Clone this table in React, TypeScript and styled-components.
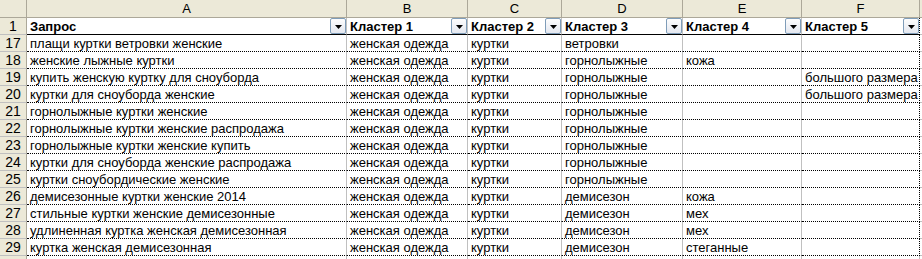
import styled, { createGlobalStyle } from 'styled-components';

const GlobalStyle = createGlobalStyle`
  html, body {
    margin: 0;
    padding: 0;
    background: #ffffff;
    overflow: hidden;
  }
`;

const columns = ['A', 'B', 'C', 'D', 'E', 'F'];
const headers = ['Запрос', 'Кластер 1', 'Кластер 2', 'Кластер 3', 'Кластер 4', 'Кластер 5'];

// номер строки + значения по колонкам A..F
const rows: [number, string[]][] = [
  [17, ['плащи куртки ветровки женские', 'женская одежда', 'куртки', 'ветровки', '', '']],
  [18, ['женские лыжные куртки', 'женская одежда', 'куртки', 'горнолыжные', 'кожа', '']],
  [19, ['купить женскую куртку для сноуборда', 'женская одежда', 'куртки', 'горнолыжные', '', 'большого размера']],
  [20, ['куртки для сноуборда женские', 'женская одежда', 'куртки', 'горнолыжные', '', 'большого размера']],
  [21, ['горнолыжные куртки женские', 'женская одежда', 'куртки', 'горнолыжные', '', '']],
  [22, ['горнолыжные куртки женские распродажа', 'женская одежда', 'куртки', 'горнолыжные', '', '']],
  [23, ['горнолыжные куртки женские купить', 'женская одежда', 'куртки', 'горнолыжные', '', '']],
  [24, ['куртки для сноуборда женские распродажа', 'женская одежда', 'куртки', 'горнолыжные', '', '']],
  [25, ['куртки сноубордические женские', 'женская одежда', 'куртки', 'горнолыжные', '', '']],
  [26, ['демисезонные куртки женские 2014', 'женская одежда', 'куртки', 'демисезон', 'кожа', '']],
  [27, ['стильные куртки женские демисезонные', 'женская одежда', 'куртки', 'демисезон', 'мех', '']],
  [28, ['удлиненная куртка женская демисезонная', 'женская одежда', 'куртки', 'демисезон', 'мех', '']],
  [29, ['куртка женская демисезонная', 'женская одежда', 'куртки', 'демисезон', 'стеганные', '']],
];

const App = () => {
  return (
    <>
      <GlobalStyle />
      <Sheet>
        <Corner />
        {columns.map((c) => (
          <ColHeader key={c}>{c}</ColHeader>
        ))}
        <ColHeader />

        <RowHeader>1</RowHeader>
        {headers.map((h, i) => (
          <HeadCell key={h} $last={i === headers.length - 1}>
            <span>{h}</span>
            <FilterButton>
              <svg width="7" height="4" viewBox="0 0 7 4">
                <path d="M0 0h7L3.5 4z" fill="#000" />
              </svg>
            </FilterButton>
          </HeadCell>
        ))}
        <Cell />

        {rows.map(([num, values]) => (
          <Row key={num} num={num} values={values} />
        ))}

        {/* следующая строка видна только краем */}
        <RowHeader />
        {columns.map((c) => (
          <Cell key={c} />
        ))}
        <Cell />
      </Sheet>
    </>
  );
};

const Row = ({ num, values }: { num: number; values: string[] }) => (
  <>
    <RowHeader>{num}</RowHeader>
    {values.map((v, i) => (
      <Cell key={i} $table $last={i === values.length - 1}>
        {v}
      </Cell>
    ))}
    <Cell />
  </>
);

export default App;

const Sheet = styled.div`
  display: grid;
  grid-template-columns: 27px 320px 121px 94px 121px 119px 118px 40px;
  grid-template-rows: 18px;
  grid-auto-rows: 17px;
  font-family: 'Liberation Sans', Arial, sans-serif;
  font-size: 13px;
  color: #000;
`;

const Corner = styled.div`
  background: #ece9d8;
  border-right: 1px solid #aca899;
  border-bottom: 1px solid #aca899;
`;

const ColHeader = styled.div`
  display: flex;
  align-items: center;
  justify-content: center;
  background: #ece9d8;
  border-right: 1px solid #aca899;
  border-bottom: 1px solid #aca899;
  box-sizing: border-box;
`;

const RowHeader = styled.div`
  display: flex;
  align-items: flex-end;
  justify-content: center;
  background: #ece9d8;
  border-right: 1px solid #aca899;
  border-bottom: 1px solid #c0c0c0;
  box-sizing: border-box;
  font-size: 14px;
  line-height: 15px;
`;

const Cell = styled.div<{ $table?: boolean; $last?: boolean }>`
  display: flex;
  align-items: flex-end;
  padding-left: 3px;
  white-space: nowrap;
  overflow: visible;
  line-height: 15px;
  box-sizing: border-box;
  border-bottom: 1px ${(p) => (p.$table ? 'dotted #000' : 'solid #c0c0c0')};
  border-right: 1px ${(p) => (p.$last ? 'dotted #000' : 'solid #c0c0c0')};
`;

const HeadCell = styled.div<{ $last?: boolean }>`
  display: flex;
  align-items: center;
  justify-content: space-between;
  padding-left: 3px;
  font-weight: bold;
  white-space: nowrap;
  box-sizing: border-box;
  border-bottom: 1px solid #000;
  border-right: 1px ${(p) => (p.$last ? 'dotted #000' : 'solid #c0c0c0')};
`;

const FilterButton = styled.span`
  display: flex;
  align-items: center;
  justify-content: center;
  width: 16px;
  height: 16px;
  box-sizing: border-box;
  border: 1px solid #7f9db9;
  border-radius: 2px;
  background: linear-gradient(#fdfdfd, #e4e8f0);
  padding-top: 1px;
`;
